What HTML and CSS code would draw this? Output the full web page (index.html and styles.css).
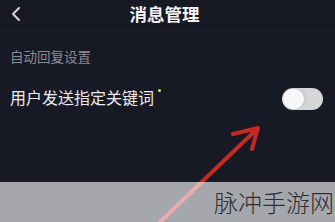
FILE: index.html
```html
<!DOCTYPE html>
<html lang="zh">
<head>
<meta charset="utf-8">
<link rel="stylesheet" href="styles.css">
</head>
<body>
<div class="screen">
  <header class="header">
    <svg class="back" width="14" height="16" viewBox="0 0 14 16"><path d="M10 2 L4 8 L10 14" fill="none" stroke="#d4d4d8" stroke-width="2" stroke-linecap="round" stroke-linejoin="round"/></svg>
    <h1 class="title">消息管理</h1>
    <span></span>
  </header>
  <div class="section-label">自动回复设置</div>
  <div class="row">
    <div class="row-label">用户发送指定关键词<span class="dot"></span></div>
    <div class="toggle"><span class="knob"></span></div>
  </div>
  <div class="spacer"></div>
  <footer class="band">脉冲手游网</footer>
  <svg class="arrow" width="335" height="222" viewBox="0 0 335 222">
    <g fill="none" stroke="#c42a22" stroke-width="4" stroke-linecap="round" stroke-linejoin="round">
      <path d="M160 222 L257 129"/>
      <path d="M233 134 L258 128 L252 149"/>
    </g>
  </svg>
</div>
</body>
</html>
```
FILE: styles.css
```css
html, body {
  margin: 0;
  padding: 0;
}
body {
  width: 335px;
  height: 222px;
  overflow: hidden;
  background: #171925;
  font-family: "Noto Sans CJK SC", "Noto Sans", sans-serif;
}
.screen {
  position: relative;
  height: 222px;
  display: flex;
  flex-direction: column;
}
.header {
  height: 30px;
  display: grid;
  grid-template-columns: 40px 1fr 40px;
  align-items: center;
  border-bottom: 1px solid #1e2030;
}
.back {
  margin-left: 9px;
  margin-top: -2px;
}
.title {
  margin: 0;
  text-align: center;
  font-size: 17.5px;
  line-height: 22px;
  font-weight: 700;
  color: #f2f2f4;
  margin-top: -2px;
  margin-left: -6px;
}
.section-label {
  padding: 16px 10px 0;
  height: 29px;
  font-size: 13.5px;
  line-height: 18px;
  color: #8a8b93;
}
.row {
  height: 46px;
  display: flex;
  align-items: center;
  justify-content: space-between;
  padding: 0 12px 0 10px;
}
.row-label {
  font-size: 16px;
  line-height: 20px;
  color: #ececee;
  display: flex;
  align-items: flex-start;
  margin-top: -5px;
}
.dot {
  width: 3px;
  height: 3px;
  border-radius: 50%;
  background: #c9e36a;
  margin-left: 4px;
  margin-top: 2px;
}
.toggle {
  width: 41px;
  height: 22px;
  border-radius: 11px;
  background: #d6d6d8;
  display: flex;
  align-items: center;
  padding-left: 1px;
  box-sizing: border-box;
}
.knob {
  width: 21px;
  height: 20px;
  border-radius: 10px;
  background: #f7f7f7;
  box-shadow: 2px 0 3px rgba(0,0,0,0.08);
}
.spacer {
  flex: 1;
}
.band {
  position: relative;
  z-index: 2;
  height: 40px;
  background: rgba(255,255,255,0.62);
  color: #2e2e32;
  font-size: 24px;
  font-weight: 300;
  line-height: 40px;
  text-align: right;
  padding-right: 1px;
  white-space: nowrap;
}
.arrow {
  position: absolute;
  left: 0;
  top: 0;
  z-index: 1;
  pointer-events: none;
}
```
